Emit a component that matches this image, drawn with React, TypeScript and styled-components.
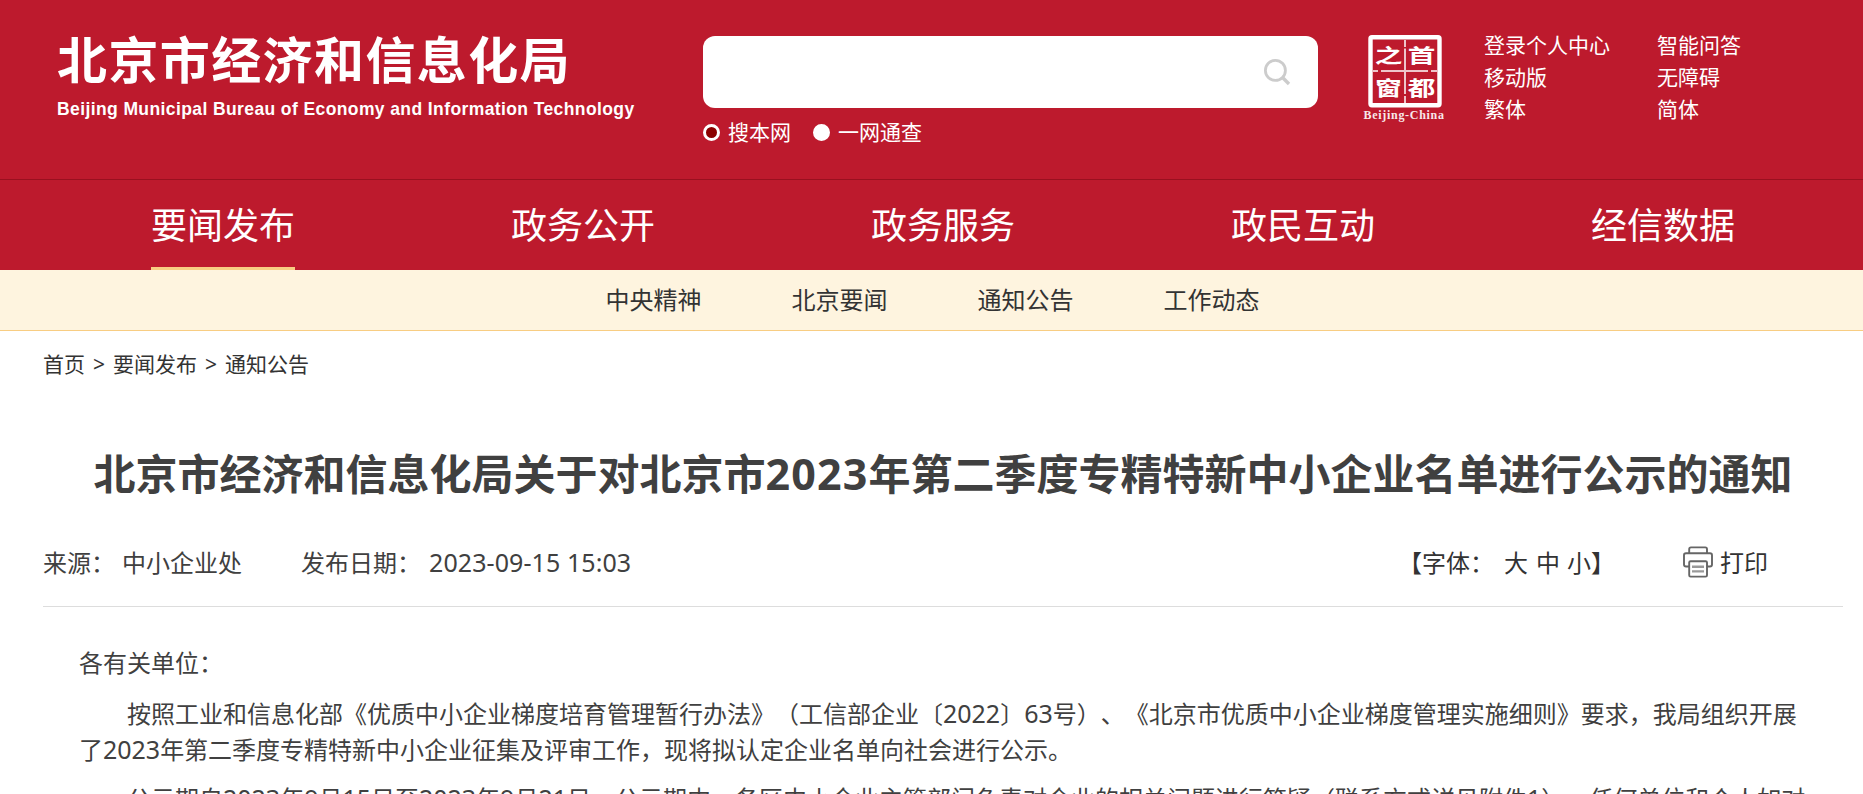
import React from "react";
import styled, { createGlobalStyle } from "styled-components";

const Global = createGlobalStyle`
  * { box-sizing: border-box; }
  html, body { margin: 0; padding: 0; height: 794px; overflow: hidden; background: #fff; }
  body { font-family: "Noto Sans CJK SC", sans-serif; color: #404040; text-spacing-trim: space-all; }
  a { color: inherit; text-decoration: none; }
`;

const Page = styled.div`
  width: 1863px;
  height: 794px;
  overflow: hidden;
`;

const Header = styled.header`
  height: 180px;
  background: #bd1a2d;
  border-bottom: 1px solid #99101f;
  display: flex;
  color: #fff;
  padding-left: 57px;
`;

const Brand = styled.div`
  width: 646px;
  padding-top: 31px;
  white-space: nowrap;
`;

const BrandName = styled.div`
  font-size: 50px;
  line-height: 52px;
  letter-spacing: 1.4px;
  font-weight: 700;
`;

const BrandLatin = styled.div`
  margin-top: 15px;
  font: 700 18.5px/22px "Liberation Sans", sans-serif;
  letter-spacing: 0.42px;
  transform: scaleX(0.946);
  transform-origin: left center;
`;

const Search = styled.div`
  width: 615px;
  padding-top: 36px;
`;

const SearchBox = styled.div`
  height: 72px;
  border-radius: 12px;
  background: #fff;
  display: flex;
  align-items: center;
  justify-content: flex-end;
  padding-right: 27px;
`;

const Choices = styled.div`
  display: flex;
  align-items: center;
  margin-top: 8px;
  height: 32px;
  font-size: 21px;
  line-height: 30px;
`;

const Dot = styled.span<{ $on?: boolean }>`
  width: 17px;
  height: 17px;
  border-radius: 50%;
  border: 3px solid #fff;
  background: ${(p) => (p.$on ? "#8b0000" : "#fff")};
  margin-right: 8px;
`;

const Choice = styled.span`
  height: 32px;
  margin-right: 22px;
`;

const SealWrap = styled.div`
  margin-left: 43px;
  padding-top: 35px;
  width: 123px;
`;

const Links = styled.div`
  padding-top: 28px;
  display: grid;
  grid-template-columns: 173px 120px;
  grid-auto-rows: 32px;
  font-size: 21px;
  line-height: 32px;
  white-space: nowrap;
`;

const Nav = styled.nav`
  height: 90px;
  background: #bd1a2d;
  padding-left: 43px;
  display: flex;
`;

const NavItem = styled.div`
  width: 360px;
  display: flex;
  justify-content: center;
`;

const NavLink = styled.a<{ $active?: boolean }>`
  height: 90px;
  color: #fff;
  font-size: 36px;
  line-height: 86px;
  border-bottom: 3px solid ${(p) => (p.$active ? "#f8cd82" : "transparent")};
`;

const SubNav = styled.div`
  height: 61px;
  background: #fef4df;
  border-bottom: 1px solid #f8cd82;
  padding-left: 605.5px;
  display: flex;
  gap: 90px;
  font-size: 24px;
  line-height: 58px;
  color: #333;
`;

const Content = styled.main`
  width: 1800px;
  margin-left: 43px;
`;

const Crumbs = styled.div`
  display: flex;
  height: 68px;
  font-size: 21px;
  line-height: 65px;
  color: #333;
`;

const Arrow = styled.span`
  width: 28px;
  line-height: 67px;
  text-align: center;
  font-family: "Noto Sans", sans-serif;
`;

const Title = styled.h1`
  margin: 39px 0 0;
  height: 68px;
  font-size: 42px;
  line-height: 68px;
  font-weight: 700;
  text-align: center;
  white-space: nowrap;
`;

const Num = styled.span`
  font-family: "Noto Sans", sans-serif;
  font-size: 25px;
  line-height: 1;
  letter-spacing: -0.02px;
`;

const TitleNum = styled(Num)`
  font-size: 43px;
  letter-spacing: 1.2px;
`;

const DateTime = styled(Num)`
  line-height: 36px;
  letter-spacing: 0.08px;
`;

const Meta = styled.div`
  height: 101px;
  border-bottom: 1px solid #ddd;
  padding-top: 38px;
  display: flex;
  font-size: 24px;
  line-height: 36px;
  white-space: nowrap;
`;

const Cell = styled.span<{ $w?: number }>`
  flex: none;
  width: ${(p) => (p.$w ? p.$w + "px" : "auto")};
`;

const Spacer = styled.span`
  flex: 1;
`;

const Tools = styled.span`
  display: flex;
  width: 445px;
  color: #333;
`;

const PrintMark = styled.svg`
  margin-top: 2px;
`;

const PrintLabel = styled(Cell)`
  margin-left: 7px;
`;

const Article = styled.article`
  padding: 37px 36px 0;
  font-size: 24px;
  line-height: 36px;
`;

const Para = styled.p<{ $indent?: boolean }>`
  margin: 0 0 15px;
  text-indent: ${(p) => (p.$indent ? "48px" : "0")};
  white-space: nowrap;

  & + & + & {
    margin-top: -2px;
  }
`;

const SearchIcon = () => (
  <svg width="28" height="28" viewBox="0 0 28 28" fill="none" stroke="#ccc" strokeWidth="2.8">
    <circle cx="12.4" cy="12.4" r="10" />
    <path d="M19.8 19.8 L26 26" strokeWidth="3.4" />
  </svg>
);

const Seal = () => (
  <svg width="83" height="88" viewBox="0 0 83 88" fill="#fff">
    <rect x="9.5" y="2.3" width="69" height="68" rx="1.5" fill="none" stroke="#fff" strokeWidth="4.4" />
    <g stroke="#fff" strokeWidth="2" opacity="0.75">
      <path d="M44 5V12M44 13.5V59M44 61V68M12 36H17M20 36H67M70 36H76" />
    </g>
    <g fontFamily="Noto Sans CJK SC" fontWeight="700" fontSize="23" textAnchor="middle">
      <text transform="translate(27.5 28) scale(1.2 .84)">之</text>
      <text transform="translate(60.5 28) scale(1.2 .84)">首</text>
      <text transform="translate(27.5 61) scale(1.15 .88)">窗</text>
      <text transform="translate(60.5 61) scale(1.2 .88)">都</text>
    </g>
    <text x="2.5" y="83.5" fontFamily="Liberation Serif" fontWeight="700" fontSize="12" textLength="80.5" opacity="0.9">
      Beijing-China
    </text>
  </svg>
);

const PrinterIcon = () => (
  <PrintMark width="30" height="32" viewBox="0 0 30 32" fill="none" stroke="#666" strokeWidth="1.9">
    <path d="M6.2 7V3.2Q6.2 1.4 8 1.4H22.3Q24 1.4 24 3.2V7" />
    <path d="M6 20.5H3Q1 20.5 1 18.5V9.2Q1 7.3 3 7.3H27Q29 7.3 29 9.2V18.5Q29 20.5 27 20.5H24" />
    <rect x="6.2" y="15.2" width="17.8" height="15.4" rx="1.4" />
    <path d="M9 20.8H21M9 25.4H21" stroke="#999" strokeWidth="2.4" />
  </PrintMark>
);

const NAV = ["要闻发布", "政务公开", "政务服务", "政民互动", "经信数据"];
const SUB = ["中央精神", "北京要闻", "通知公告", "工作动态"];
const LINKS = ["登录个人中心", "智能问答", "移动版", "无障碍", "繁体", "简体"];

export default function App() {
  return (
    <Page>
      <Global />
      <Header>
        <Brand>
          <BrandName>北京市经济和信息化局</BrandName>
          <BrandLatin>Beijing Municipal Bureau of Economy and Information Technology</BrandLatin>
        </Brand>
        <Search>
          <SearchBox>
            <SearchIcon />
          </SearchBox>
          <Choices>
            <Dot $on />
            <Choice>搜本网</Choice>
            <Dot />
            <Choice>一网通查</Choice>
          </Choices>
        </Search>
        <SealWrap>
          <Seal />
        </SealWrap>
        <Links>
          {LINKS.map((t) => (
            <a key={t}>{t}</a>
          ))}
        </Links>
      </Header>
      <Nav>
        {NAV.map((t, i) => (
          <NavItem key={t}>
            <NavLink $active={i === 0}>{t}</NavLink>
          </NavItem>
        ))}
      </Nav>
      <SubNav>
        {SUB.map((t) => (
          <a key={t}>{t}</a>
        ))}
      </SubNav>
      <Content>
        <Crumbs>
          <a>首页</a>
          <Arrow>&gt;</Arrow>
          <a>要闻发布</a>
          <Arrow>&gt;</Arrow>
          <a>通知公告</a>
        </Crumbs>
        <Title>
          北京市经济和信息化局关于对北京市<TitleNum>2023</TitleNum>年第二季度专精特新中小企业名单进行公示的通知
        </Title>
        <Meta>
          <Cell $w={79}>来源：</Cell>
          <Cell $w={179}>中小企业处</Cell>
          <Cell $w={128}>发布日期：</Cell>
          <DateTime>2023-09-15 15:03</DateTime>
          <Spacer />
          <Tools>
            <Cell $w={106}>【字体：</Cell>
            <Cell $w={32}>大</Cell>
            <Cell $w={31}>中</Cell>
            <Cell $w={116}>小】</Cell>
            <PrinterIcon />
            <PrintLabel>打印</PrintLabel>
          </Tools>
        </Meta>
        <Article>
          <Para>各有关单位：</Para>
          <Para $indent>
            按照工业和信息化部《优质中小企业梯度培育管理暂行办法》（工信部企业〔<Num>2022</Num>〕<Num>63</Num>号）、《北京市优质中小企业梯度管理实施细则》要求，我局组织开展
            <br />了<Num>2023</Num>年第二季度专精特新中小企业征集及评审工作，现将拟认定企业名单向社会进行公示。
          </Para>
          <Para $indent>
            公示期自<Num>2023</Num>年<Num>9</Num>月<Num>15</Num>日至<Num>2023</Num>年<Num>9</Num>月<Num>21</Num>日。公示期内，各区中小企业主管部门负责对企业的相关问题进行答疑（联系方式详见附件<Num>1</Num>）。任何单位和个人如对
          </Para>
        </Article>
      </Content>
    </Page>
  );
}
